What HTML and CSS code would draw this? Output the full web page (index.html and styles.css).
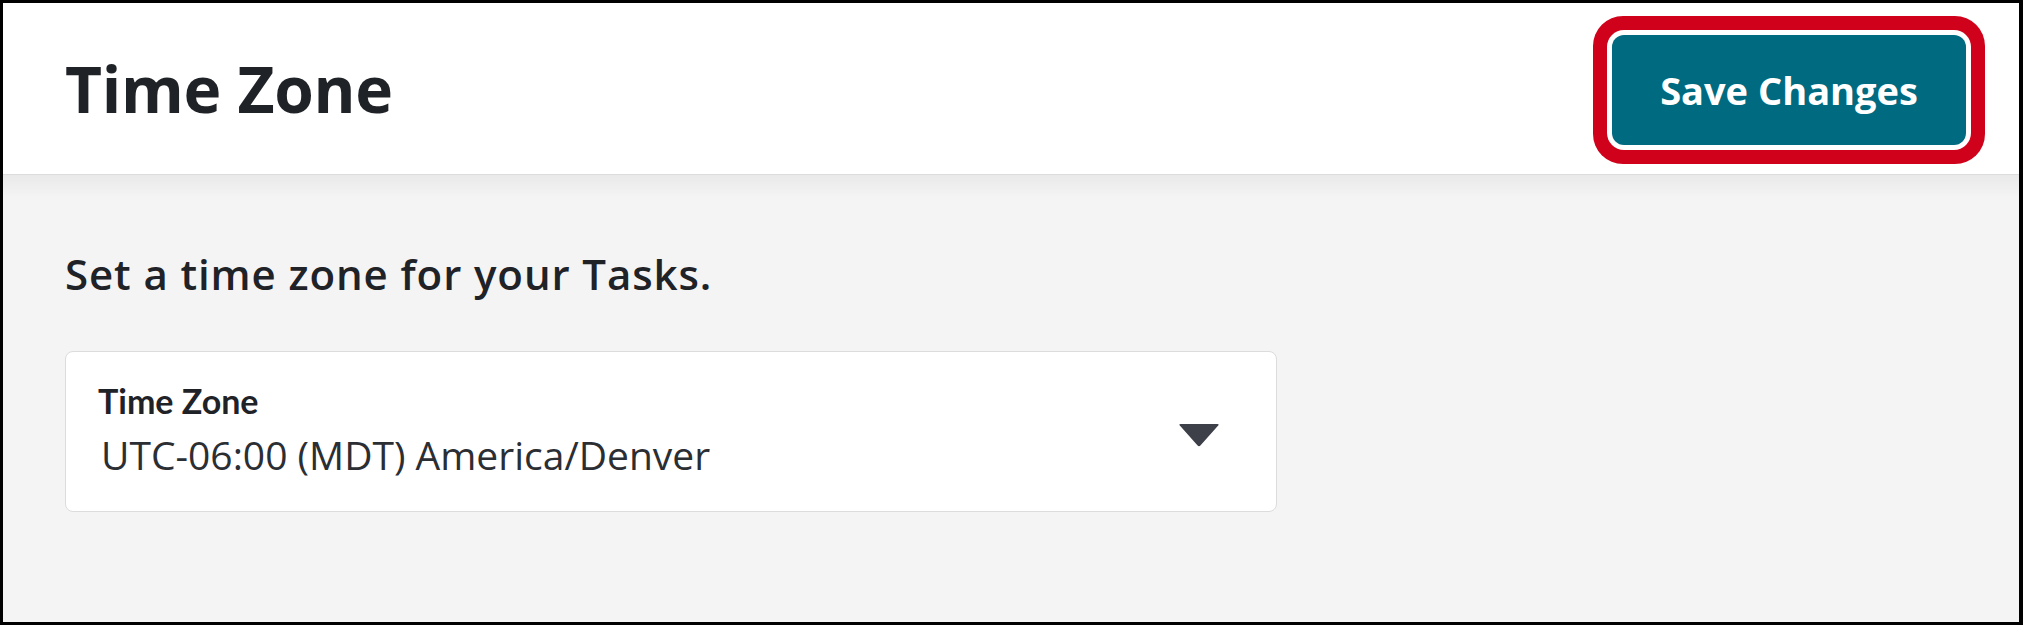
FILE: index.html
```html
<!DOCTYPE html>
<html lang="en">
<head>
<meta charset="utf-8">
<title>Time Zone</title>
<link rel="stylesheet" href="styles.css">
</head>
<body>
<div class="frame">
  <header class="page-header">
    <h1 class="page-title">Time Zone</h1>
    <button class="save-btn" type="button">Save Changes</button>
  </header>
  <main class="page-body">
    <p class="intro">Set a time zone for your Tasks.</p>
    <div class="select-card">
      <div class="select-text">
        <div class="select-label">Time Zone</div>
        <div class="select-value">UTC-06:00 (MDT) America/Denver</div>
      </div>
      <svg class="select-arrow" width="42" height="24" viewBox="0 0 42 24" aria-hidden="true">
        <path d="M2.5 1 H39.5 Q41.5 1 40.2 2.6 L22.4 22.4 Q21 24 19.6 22.4 L1.8 2.6 Q0.5 1 2.5 1 Z" fill="#3d4049"/>
      </svg>
    </div>
  </main>
</div>
</body>
</html>
```

FILE: styles.css
```css
* { box-sizing: border-box; }
html, body { margin: 0; padding: 0; }
body {
  width: 2023px;
  height: 625px;
  overflow: hidden;
  background: #fff;
  font-family: "Open Sans", "Noto Sans", sans-serif;
  color: #1f2226;
}
.frame {
  width: 2023px;
  height: 625px;
  border: 3px solid #000;
  border-right-width: 4px;
  display: flex;
  flex-direction: column;
  background: #f4f4f4;
}
.page-header {
  height: 172px;
  flex: none;
  background: #fff;
  border-bottom: 1px solid #dcdcdc;
  display: flex;
  align-items: center;
  justify-content: space-between;
  padding: 0 53px 0 62px;
}
.page-title {
  margin: 0;
  font-size: 64px;
  font-weight: 700;
  line-height: 1;
  color: #1f2226;
  letter-spacing: -0.3px;
}
.save-btn {
  width: 354px;
  height: 110px;
  margin-top: 2px;
  border: none;
  border-radius: 12px;
  background: #006b80;
  color: #fff;
  font-family: "Open Sans", "Noto Sans", sans-serif;
  font-size: 38px;
  font-weight: 700;
  box-shadow: 0 0 0 5px #fff, 0 0 0 19px #d0021b;
  cursor: pointer;
}
.page-body {
  flex: 1;
  padding: 0 0 0 62px;
  background: linear-gradient(#e9e9e9, #f4f4f4 22px);
}
.intro {
  margin: 74px 0 0;
  font-size: 42px;
  font-weight: 600;
  line-height: 50px;
  color: #1f2226;
  letter-spacing: 0.9px;
}
.select-card {
  margin-top: 52px;
  width: 1212px;
  height: 161px;
  background: #fff;
  border: 1px solid #dcdcdc;
  border-radius: 8px;
  display: flex;
  align-items: center;
  justify-content: space-between;
  padding: 0 56px 0 32px;
}
.select-text {
  display: flex;
  flex-direction: column;
}
.select-label {
  font-family: "Lato", "Noto Sans", sans-serif;
  font-size: 34px;
  font-weight: 700;
  line-height: 40px;
  color: #1f2226;
  margin-top: -2px;
}
.select-value {
  font-family: "Open Sans", "Noto Sans", sans-serif;
  font-size: 39px;
  font-weight: 400;
  line-height: 52px;
  margin-top: 8px;
  margin-left: 3px;
  color: #2b2e33;
}
.select-arrow {
  display: block;
  flex: none;
  margin-top: 6px;
}
```
